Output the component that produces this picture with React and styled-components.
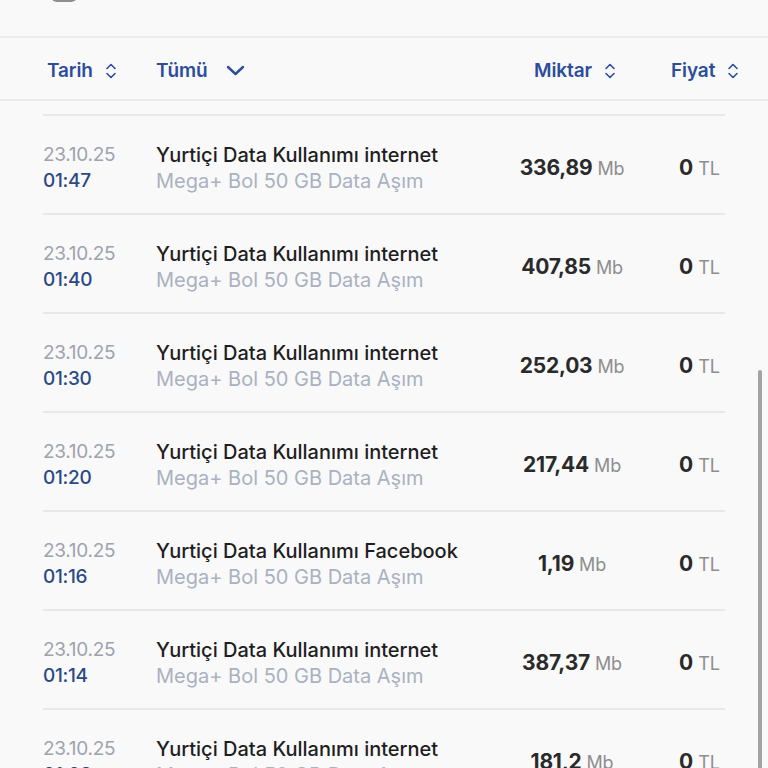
import styled, { createGlobalStyle } from "styled-components";

const GlobalStyle = createGlobalStyle`
  html, body {
    margin: 0;
    padding: 0;
    background: #f9f9fa;
    overflow: hidden;
  }
  body {
    font-family: Inter, "Noto Sans", sans-serif;
  }
`;

const Page = styled.div`
  height: 768px;
  overflow: hidden;
  background: #f9f9fa;
`;

const TopStrip = styled.div`
  display: flex;
  align-items: flex-start;
  height: 36px;
  border-bottom: 2px solid #ebebed;
  padding-left: 51px;
  overflow: hidden;
`;

const CutBox = styled.div`
  width: 26px;
  height: 14px;
  margin-top: -12px;
  border-radius: 6px;
  border: 2px solid #8e8e8e;
  border-top: none;
  box-sizing: border-box;
`;

const Header = styled.div`
  display: grid;
  grid-template-columns: 109px 1fr 137px 70px;
  align-items: center;
  height: 57px;
  padding: 4px 27px 0 47px;
  border-bottom: 2px solid #ebebed;
`;

const HeadCell = styled.div`
  display: flex;
  align-items: center;
  gap: ${(p) => p.$gap || 12}px;
  color: #2c4d9b;
  font-size: 19px;
  font-weight: 600;
  letter-spacing: -0.1px;
`;

const List = styled.div`
  padding: 13px 43px 0 43px;
`;

const Row = styled.div`
  display: grid;
  grid-template-columns: 113px 1fr 120px 93px;
  align-items: center;
  height: 91px;
  padding-top: 6px;
  border-top: 2px solid #e8e8ea;
`;

const Stack = styled.div`
  display: flex;
  flex-direction: column;
  gap: 4px;
`;

const DateText = styled.span`
  color: #9ea3ad;
  font-size: 19px;
  line-height: 22px;
  letter-spacing: -0.3px;
`;

const TimeText = styled.span`
  color: #2b4985;
  font-size: 19px;
  line-height: 22px;
  font-weight: 500;
  letter-spacing: -0.3px;
`;

const Title = styled.span`
  color: #1e1e1e;
  font-size: 20px;
  line-height: 22px;
  font-weight: 500;
`;

const Sub = styled.span`
  color: #aab1c0;
  font-size: 20px;
  line-height: 22px;
`;

const Amount = styled.div`
  text-align: center;
  white-space: nowrap;
  color: #2a2a2a;
  font-size: 21px;
  font-weight: 700;
  letter-spacing: -0.2px;
`;

const Price = styled.div`
  padding-left: 47px;
  white-space: nowrap;
  color: #2a2a2a;
  font-size: 21px;
  font-weight: 700;
`;

const Unit = styled.span`
  color: #8e8e8e;
  font-size: 18px;
  font-weight: 400;
  margin-left: 5px;
`;

const Scrollbar = styled.div`
  position: fixed;
  right: 6px;
  top: 370px;
  width: 4px;
  height: 420px;
  border-radius: 2px;
  background: #a3a3a3;
`;

const SortIcon = () => (
  <svg width="12" height="18" viewBox="0 0 12 18" fill="none" stroke="#2c4d9b" strokeWidth="1.6" strokeLinecap="round" strokeLinejoin="round">
    <path d="M2 6.5 L6 2.5 L10 6.5" />
    <path d="M2 11.5 L6 15.5 L10 11.5" />
  </svg>
);

const ChevronDown = () => (
  <svg width="19" height="11" viewBox="0 0 19 11" fill="none" stroke="#2c4d9b" strokeWidth="2.4" strokeLinecap="round" strokeLinejoin="round">
    <path d="M2 2 L9.5 9 L17 2" />
  </svg>
);

const rows = [
  { time: "01:47", title: "Yurtiçi Data Kullanımı internet", amount: "336,89" },
  { time: "01:40", title: "Yurtiçi Data Kullanımı internet", amount: "407,85" },
  { time: "01:30", title: "Yurtiçi Data Kullanımı internet", amount: "252,03" },
  { time: "01:20", title: "Yurtiçi Data Kullanımı internet", amount: "217,44" },
  { time: "01:16", title: "Yurtiçi Data Kullanımı Facebook", amount: "1,19" },
  { time: "01:14", title: "Yurtiçi Data Kullanımı internet", amount: "387,37" },
  { time: "01:08", title: "Yurtiçi Data Kullanımı internet", amount: "181,2" },
];

export default function App() {
  return (
    <Page>
      <GlobalStyle />
      <TopStrip>
        <CutBox />
      </TopStrip>
      <Header>
        <HeadCell>
          Tarih <SortIcon />
        </HeadCell>
        <HeadCell $gap={18}>
          Tümü <ChevronDown />
        </HeadCell>
        <HeadCell>
          Miktar <SortIcon />
        </HeadCell>
        <HeadCell>
          Fiyat <SortIcon />
        </HeadCell>
      </Header>
      <List>
        {rows.map((r, i) => (
          <Row key={i}>
            <Stack>
              <DateText>23.10.25</DateText>
              <TimeText>{r.time}</TimeText>
            </Stack>
            <Stack>
              <Title>{r.title}</Title>
              <Sub>Mega+ Bol 50 GB Data Aşım</Sub>
            </Stack>
            <Amount>
              {r.amount}
              <Unit>Mb</Unit>
            </Amount>
            <Price>
              0<Unit>TL</Unit>
            </Price>
          </Row>
        ))}
      </List>
      <Scrollbar />
    </Page>
  );
}
